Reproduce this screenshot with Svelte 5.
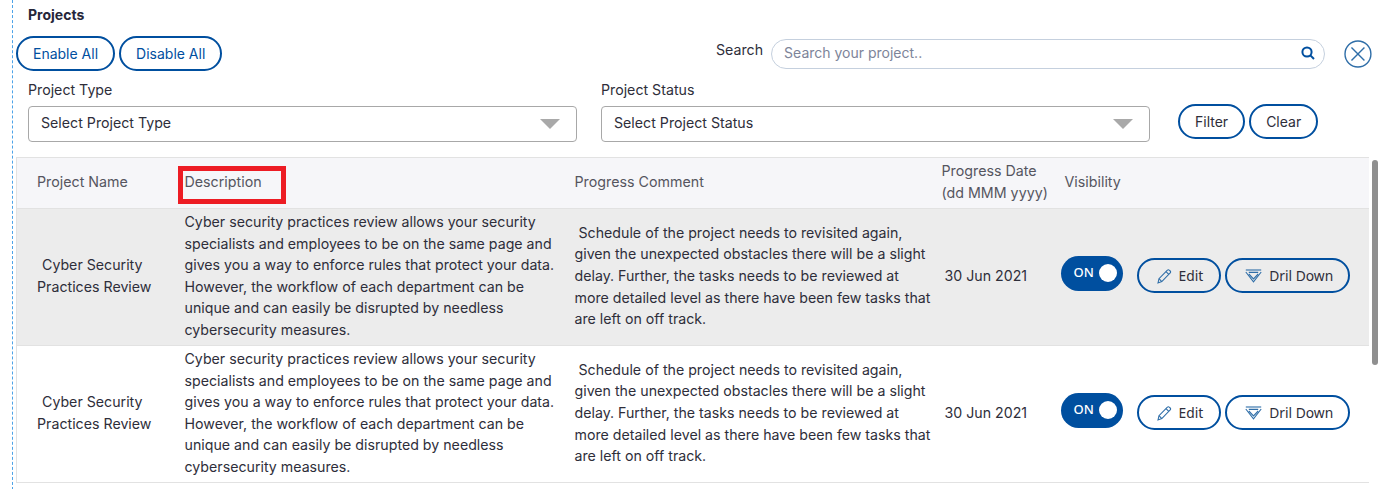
<script>
  const rows = [1, 2];
  const desc = ["Cyber security practices review allows your security","specialists and employees to be on the same page and","gives you a way to enforce rules that protect your data.","However, the workflow of each department can be","unique and can easily be disrupted by needless","cybersecurity measures."];
  const comment = ["\u00a0Schedule of the project needs to revisited again,","given the unexpected obstacles there will be a slight","delay. Further, the tasks needs to be reviewed at","more detailed level as there have been few tasks that","are left on off track."];
</script>

<div class="page">
  <div class="panel">
    <h1>Projects</h1>
    <div class="top">
      <div class="btns">
        <button class="pill blue">Enable All</button>
        <button class="pill blue">Disable All</button>
      </div>
      <div class="search">
        <span class="search-label">Search</span>
        <div class="search-box">
          <span>Search your project..</span>
          <svg class="glass" width="14" height="14" viewBox="0 0 14 14" fill="none" stroke="#004f9f" stroke-width="2"><circle cx="6" cy="6" r="4.6"/><path d="M9.4 9.4 13 13"/></svg>
        </div>
      </div>
      <svg class="close" width="28" height="28" viewBox="0 0 28 28" fill="none" stroke="#2f6ea8" stroke-width="1.4"><circle cx="14" cy="14" r="13"/><path d="M7.5 7.5 20.5 20.5M20.5 7.5 7.5 20.5"/></svg>
    </div>
    <div class="filters">
      <div class="field">
        <label for="t">Project Type</label>
        <div class="select" id="t">Select Project Type<i></i></div>
      </div>
      <div class="field">
        <label for="s">Project Status</label>
        <div class="select" id="s">Select Project Status<i></i></div>
      </div>
      <div class="fbtns">
        <button class="pill">Filter</button>
        <button class="pill">Clear</button>
      </div>
    </div>
    <table>
      <colgroup><col class="c1"/><col class="c2"/><col class="c3"/><col class="c4"/><col class="c5"/></colgroup>
      <thead>
        <tr>
          <th class="name-h">Project Name</th>
          <th><span class="marked">Description</span></th>
          <th>Progress Comment</th>
          <th>Progress Date<br/>(dd MMM yyyy)</th>
          <th>Visibility</th>
        </tr>
      </thead>
      <tbody>
        {#each rows as r, i}
          <tr class:shade={i === 0}>
            <td class="name">Cyber Security&nbsp;<br/>Practices Review</td>
            <td>{#each desc as l}{l}<br/>{/each}</td>
            <td>{#each comment as l}{l}<br/>{/each}</td>
            <td class="date">30 Jun 2021</td>
            <td>
              <div class="actions">
                <div class="toggle"><span>ON</span><b></b></div>
                <button class="pill act edit">
                  <svg width="15" height="16" viewBox="0 0 15 16" fill="none" stroke="#2f6ea8" stroke-width="1.1"><path d="M1 15 2 10.7 10.4 2.1a1.3 1.3 0 0 1 1.9 0l.9.9a1.3 1.3 0 0 1 0 1.9L4.8 13.6Z"/><path d="M2 10.7 4.8 13.6M9 3.6l2.8 2.8"/></svg>
                  Edit
                </button>
                <button class="pill act">
                  <svg width="17" height="14" viewBox="0 0 17 14" fill="none" stroke="#2f6ea8" stroke-width="1.1"><path d="M.8 1H16.2"/><path d="M.8 3 8.5 12.8 16.2 3"/><path d="M3.8 3.4H13.2M3.8 5 8.5 10 13.2 5"/></svg>
                  Dril Down
                </button>
              </div>
            </td>
          </tr>
        {/each}
      </tbody>
    </table>
  </div>
  <div class="scrollbar"></div>
</div>

<style>
  :global(body) { margin: 0; background: #fff; overflow: hidden; }
  .page { position: relative; width: 1389px; height: 489px; overflow: hidden; font-family: Inter, "Liberation Sans", sans-serif; font-size: 14.2px; line-height: 21.6px; color: #2e2e3a; box-sizing: border-box; }
  .panel { margin-left: 12px; border-left: 1px dashed #4da3e8; padding: 4px 0 12px 3px; width: 1356px; }
  h1 { margin: 0 0 0 12px; font-size: 14px; font-weight: 700; line-height: 21px; color: #26263a; }
  .top { display: flex; align-items: flex-start; margin-top: 11px; height: 40px; }
  .btns { display: flex; gap: 4px; width: 700px; flex: none; }
  .pill { height: 35px; padding: 0 15px; border: 2px solid #004f9f; border-radius: 18px; background: transparent; font: inherit; font-size: 14px; color: #2e2e3a; white-space: nowrap; box-sizing: border-box; }
  .pill.blue { color: #004f9f; }
  .search { display: flex; align-items: flex-start; gap: 8px; }
  .search-label { margin-top: 3px; color: #2e2e3a; }
  .search-box { width: 554px; height: 30px; box-sizing: border-box; margin-top: 3px; border: 1px solid #c5d0de; border-radius: 15px; padding: 0 9px 2px 12px; display: flex; align-items: center; justify-content: space-between; color: #7d8499; font-size: 14px; }
  .close { margin: 4px 0 0 19px; }
  .filters { display: flex; margin-top: 3px; margin-left: 12px; align-items: flex-end; }
  .field { display: flex; flex-direction: column; width: 549px; margin-right: 24px; }
  label { line-height: 21px; margin-bottom: 6px; }
  .select { position: relative; height: 36px; box-sizing: border-box; border: 1px solid #a8a8a8; border-radius: 4px; padding: 0 12px 2px; display: flex; align-items: center; color: #2e2e3a; }
  .select i { position: absolute; right: 16px; top: 12px; border-left: 10px solid transparent; border-right: 10px solid transparent; border-top: 10px solid #a9a9a9; }
  .fbtns { display: flex; gap: 4px; margin-left: 4px; margin-bottom: 3px; }
  table { border-collapse: collapse; table-layout: fixed; width: 1352px; margin-top: 15px; white-space: nowrap; }
  .c1 { width: 156px; } .c2 { width: 390px; } .c3 { width: 367px; } .c4 { width: 123px; } .c5 { width: 316px; }
  th { background: #f6f6f9; font-weight: 400; font-size: 14.25px; text-align: left; height: 51px; padding: 0 0 3px 12px; box-sizing: border-box; color: #555560; border-top: 1px solid #e2e2e2; border-bottom: 1px solid #e2e2e2; }
  th.name-h { padding-left: 20px; }
  .marked { position: relative; display: inline-block; }
  .marked::after { content: ""; position: absolute; left: -7px; top: -5px; width: 108px; height: 38px; border: 5px solid #ed1c24; box-sizing: border-box; }
  td { padding: 2px 0 4.4px 12px; border-bottom: 1px solid #e2e2e2; vertical-align: middle; }
  tr { border-left: 1px solid #e2e2e2; }
  tr.shade td { background: #ececec; }
  td.name { text-align: center; padding: 0 1px 2px 0; }
  td.date { padding-left: 15px; }
  .actions { display: flex; align-items: center; margin-left: -4px; }
  .toggle { width: 62px; height: 35px; border-radius: 18px; background: #004f9f; color: #fff; display: flex; align-items: center; justify-content: space-between; padding: 0 6px 0 13px; box-sizing: border-box; font-family: "Noto Sans", sans-serif; font-size: 13px; font-weight: 500; margin-top: -5px; }
  .toggle b { width: 18px; height: 18px; border-radius: 50%; background: #fff; }
  .act { font-family: "Noto Sans", sans-serif; font-size: 13.8px; display: flex; align-items: center; gap: 7px; padding: 0 15px 0 18px; margin-left: 4px; }
  .act.edit { margin-left: 14px; padding-right: 16px; }
  .scrollbar { position: absolute; left: 1372px; top: 160px; width: 6px; height: 205px; background: #8f8f8f; border-radius: 3px; }
</style>
